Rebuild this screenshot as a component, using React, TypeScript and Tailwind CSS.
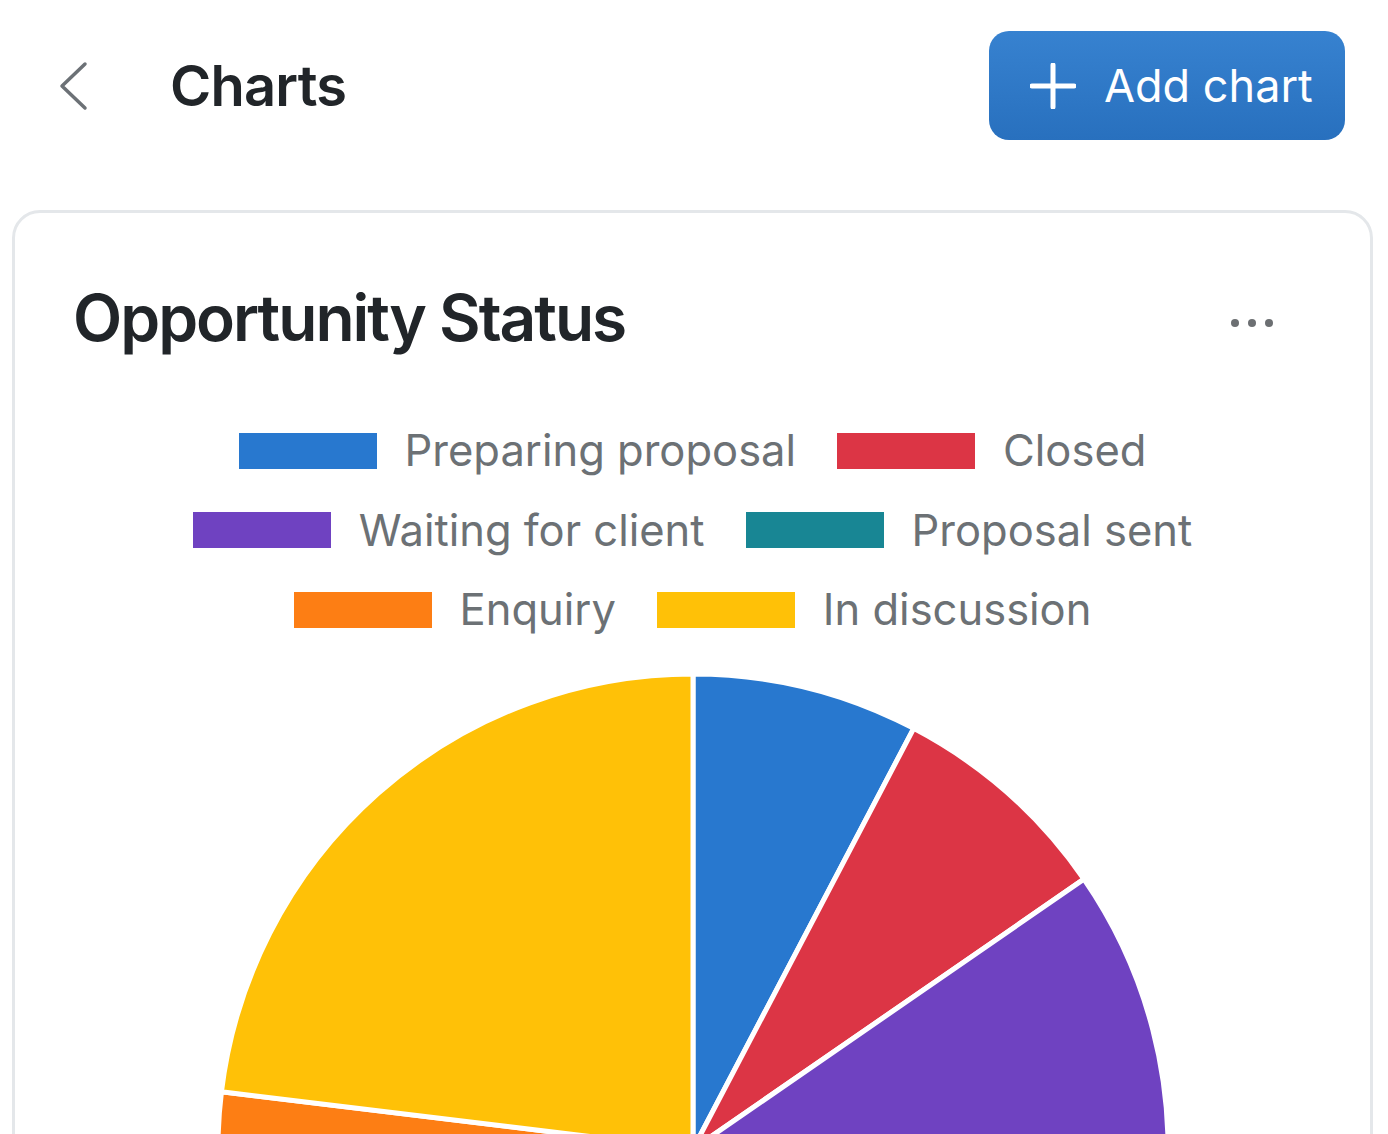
import React from 'react'

type Slice = { label: string; color: string; value: number }

const slices: Slice[] = [
  { label: 'Preparing proposal', color: '#2878cf', value: 1 },
  { label: 'Closed', color: '#dc3545', value: 1 },
  { label: 'Waiting for client', color: '#6f42c1', value: 3 },
  { label: 'Proposal sent', color: '#188694', value: 2 },
  { label: 'Enquiry', color: '#fd7e14', value: 3 },
  { label: 'In discussion', color: '#ffc107', value: 3 },
]

const legendRows: Slice[][] = [
  [slices[0], slices[1]],
  [slices[2], slices[3]],
  [slices[4], slices[5]],
]

function PieChart() {
  const total = slices.reduce((sum, s) => sum + s.value, 0)
  const cx = 480
  const cy = 480
  const r = 475
  let start = 0

  const point = (angle: number) => {
    const rad = ((angle - 90) * Math.PI) / 180
    return [cx + r * Math.cos(rad), cy + r * Math.sin(rad)]
  }

  return (
    <svg width="960" height="960" viewBox="0 0 960 960" className="block shrink-0">
      {slices.map((s) => {
        const sweep = (s.value / total) * 360
        const [x1, y1] = point(start)
        const [x2, y2] = point(start + sweep)
        const large = sweep > 180 ? 1 : 0
        start += sweep
        return (
          <path
            key={s.label}
            d={`M ${cx} ${cy} L ${x1} ${y1} A ${r} ${r} 0 ${large} 1 ${x2} ${y2} Z`}
            fill={s.color}
            stroke="#ffffff"
            strokeWidth={5}
            strokeLinejoin="round"
          />
        )
      })}
    </svg>
  )
}

export default function App() {
  return (
    <div className="h-[1134px] w-[1388px] overflow-hidden bg-white font-['Inter','Liberation_Sans',sans-serif] text-[#212529]">
      <header className="flex h-[171px] items-center justify-between pl-[58px] pr-[43px]">
        <div className="flex items-center">
          <svg width="30" height="50" viewBox="0 0 30 50" className="shrink-0">
            <path d="M27 3 L4 25 L27 47" fill="none" stroke="#6c7176" strokeWidth="3.5" strokeLinecap="round" strokeLinejoin="round" />
          </svg>
          <h1 className="ml-[82px] text-[56px] font-semibold leading-none tracking-[-0.8px]">Charts</h1>
        </div>
        <button className="flex h-[109px] w-[356px] items-center rounded-[20px] bg-gradient-to-b from-[#3782d0] to-[#2870be] pl-[41px] text-white">
          <svg width="46" height="46" viewBox="0 0 46 46" className="shrink-0">
            <path d="M23 2 V44 M2 23 H44" stroke="#ffffff" strokeWidth="5" strokeLinecap="round" />
          </svg>
          <span className="ml-[28px] text-[45px] leading-none">Add chart</span>
        </button>
      </header>

      <section className="ml-[12px] mt-[39px] h-[1200px] w-[1361px] rounded-[28px] border-[3px] border-[#e4e7ea]">
        <div className="flex items-center justify-between pl-[58px] pr-[97px] pt-[73px]">
          <h2 className="text-[64px] font-semibold leading-none tracking-[-2px]">Opportunity Status</h2>
          <div className="mt-[10px] flex gap-[9px]">
            <span className="h-[8px] w-[8px] rounded-full bg-[#6c6f72]" />
            <span className="h-[8px] w-[8px] rounded-full bg-[#6c6f72]" />
            <span className="h-[8px] w-[8px] rounded-full bg-[#6c6f72]" />
          </div>
        </div>

        <div className="mt-[79px] flex flex-col items-center gap-[36px]">
          {legendRows.map((row, i) => (
            <div key={i} className="flex items-center gap-[41px]">
              {row.map((s) => (
                <div key={s.label} className="flex items-center gap-[28px]">
                  <span className="h-[36px] w-[138px]" style={{ backgroundColor: s.color }} />
                  <span className="text-[43.5px] leading-none text-[#6c7175]">{s.label}</span>
                </div>
              ))}
            </div>
          ))}
        </div>

        <div className="mt-[37px] flex justify-center">
          <PieChart />
        </div>
      </section>
    </div>
  )
}
